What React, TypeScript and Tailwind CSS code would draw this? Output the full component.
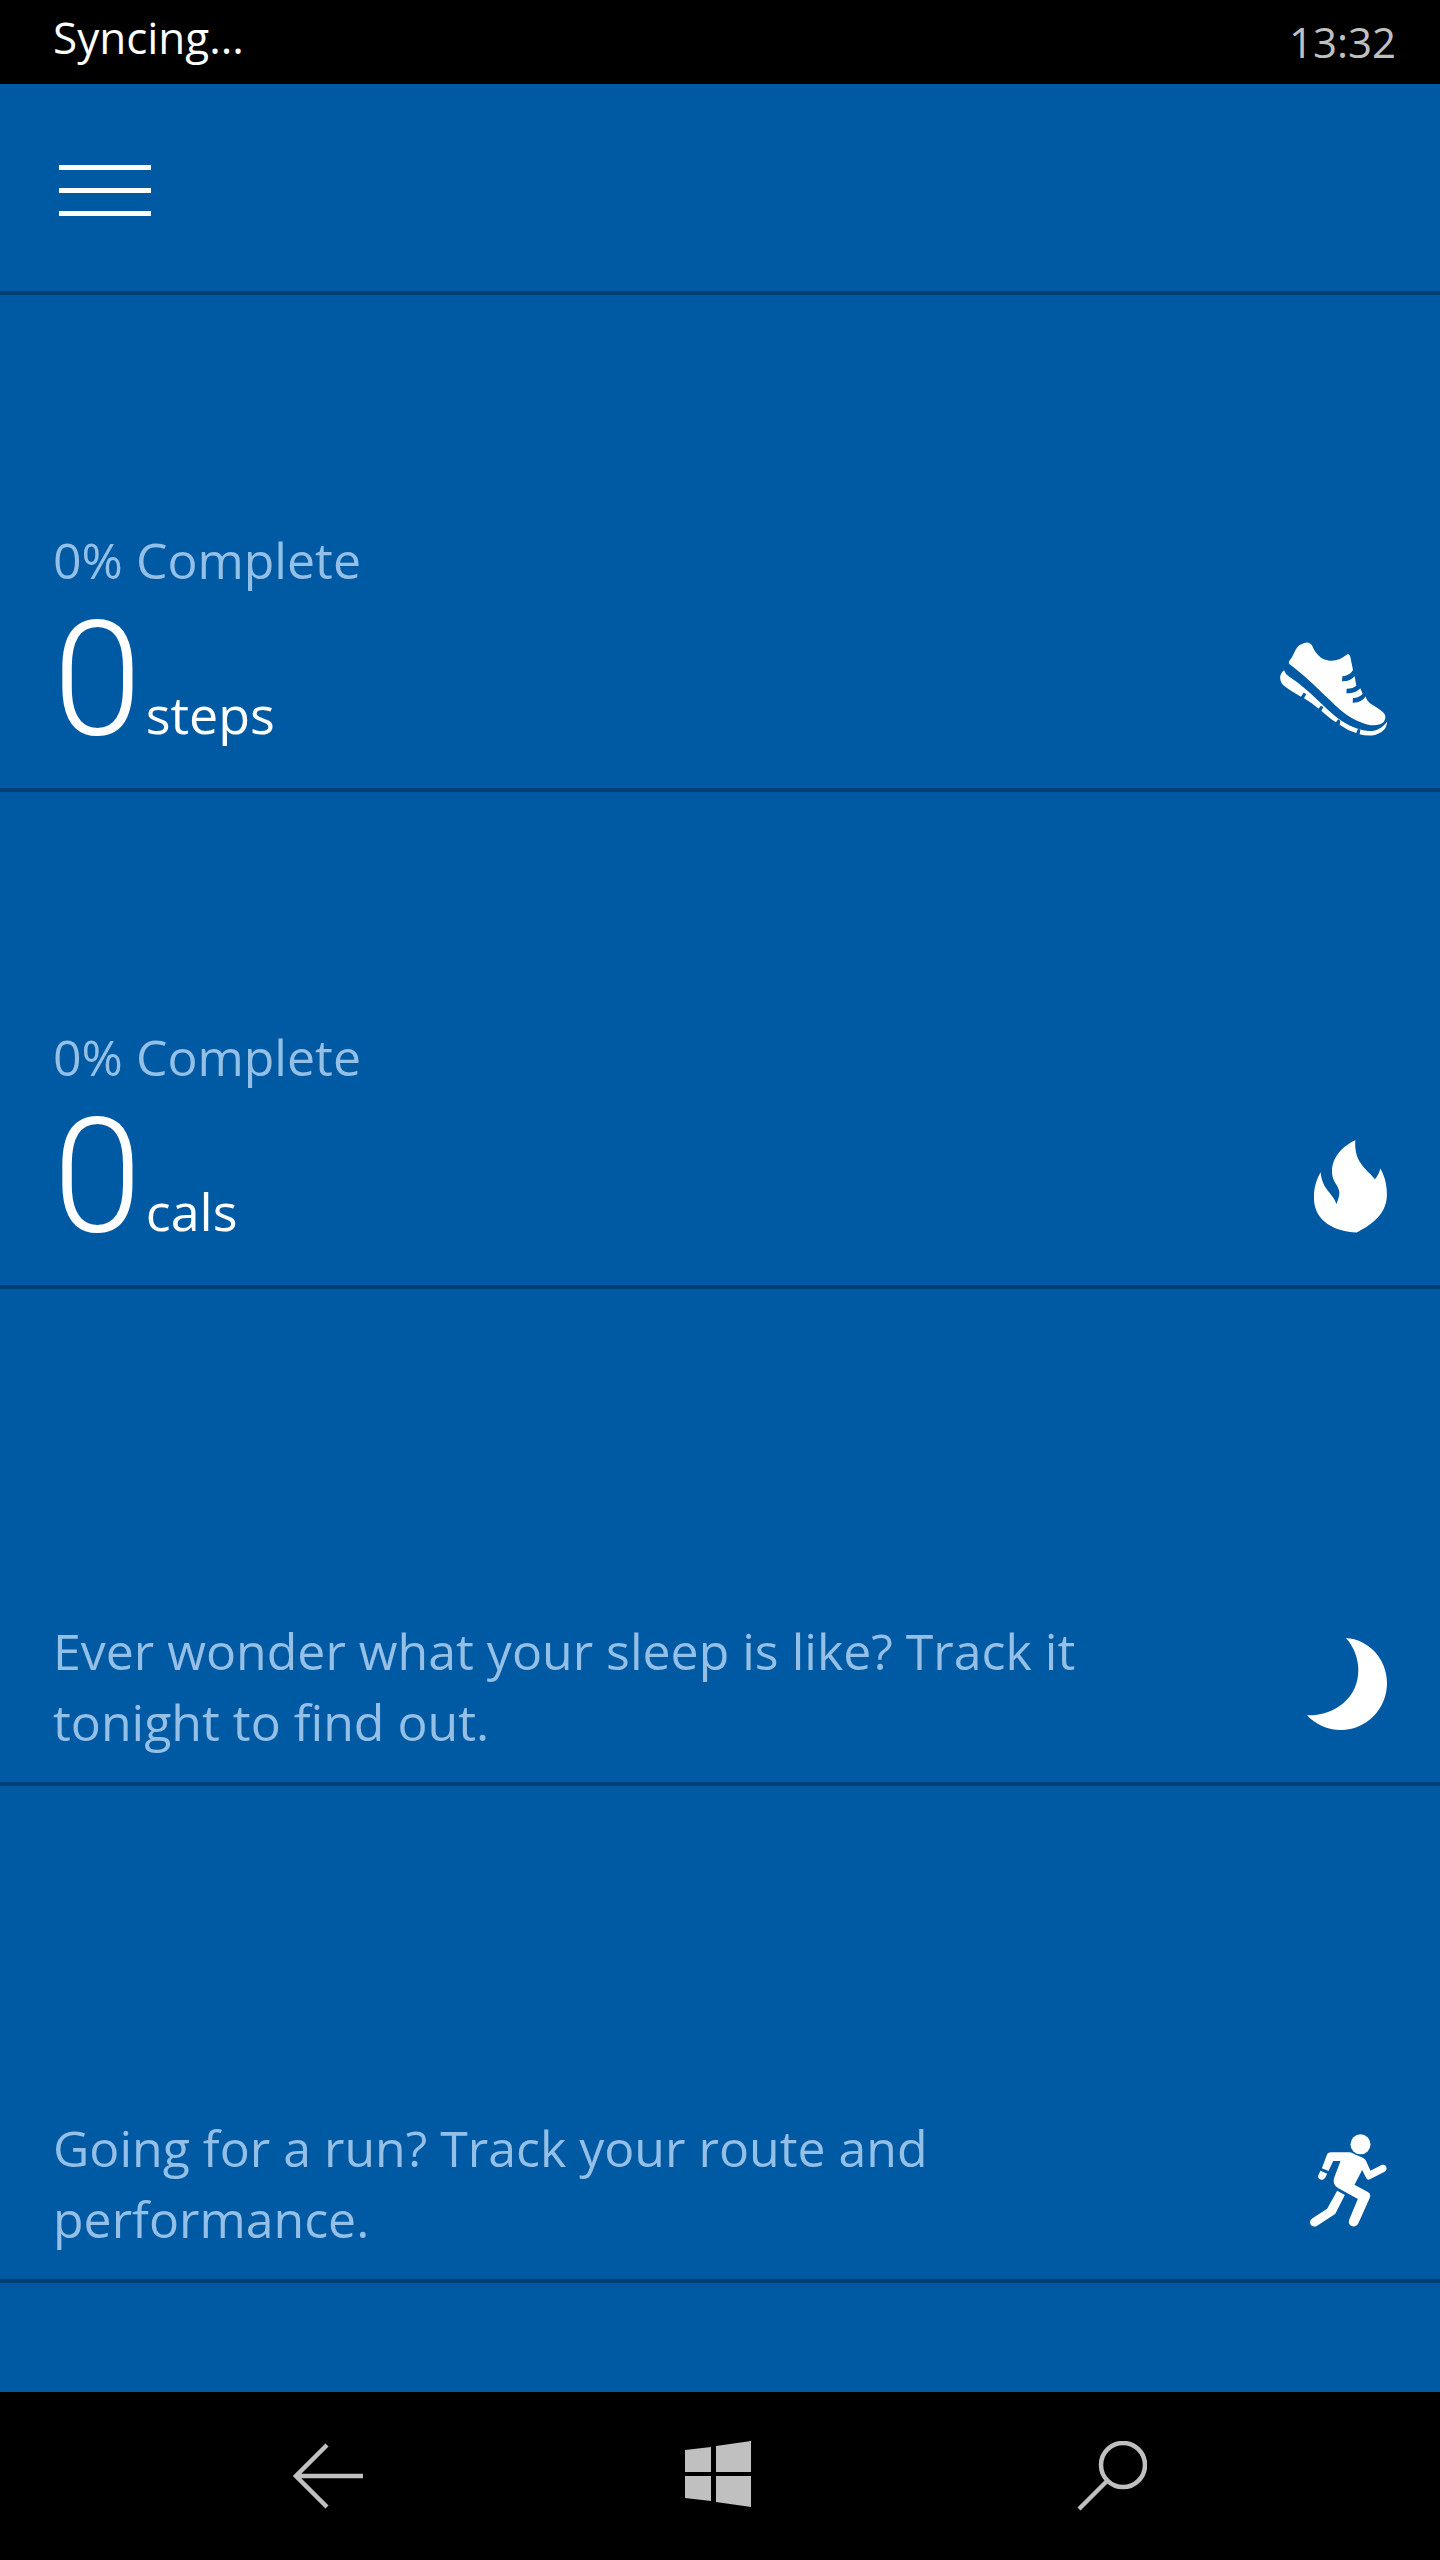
import type { ReactNode } from "react";

const ShoeIcon = () => (
    <svg viewBox="60 67 321 282" className="w-[107px] h-[94px]" fill="currentColor" aria-hidden="true">
        <path d="M138 69C146 67 152 72 157 79C164 95 174 110 190 118C206 125 222 125 238 119C248 115 255 108 262 104C267 102 270 107 271 112L279 151C274 160 264 168 247 170L246 185C262 186 276 180 284 170L289 198C282 204 273 207 260 207L259 221C276 222 293 216 301 206L308 222C302 230 292 234 279 235L278 249C294 250 309 243 317 230C319 240 324 247 333 253C350 264 366 271 374 284C378 292 376 300 371 307C358 319 332 320 308 310C285 301 264 291 245 274C195 230 148 178 88 133C85 129 87 124 90 121C102 108 104 88 118 77C124 73 131 70 138 69Z" />
        <path d="M73 152C75 165 88 171 98 178C140 207 180 249 217 282C247 309 285 329 325 334C347 336 368 324 381 306C382 325 367 340 345 346C329 349 313 348 299 344L301 331L294 327L289 340C271 335 255 326 239 315L241 303L234 299L228 308C212 298 197 284 184 273L190 262L182 258L176 267C162 257 149 245 132 236L139 223L131 219L123 231C107 222 88 211 74 200C63 191 59 181 61 168C63 161 67 155 73 152Z" />
    </svg>
);

const FlameIcon = () => (
    <svg viewBox="72 62 219 278" className="w-[73px] h-[93px]" fill="currentColor" aria-hidden="true">
        <path d="M196 62C158 79 124 114 126 160C127 190 149 198 148 222C147 235 143 244 139 254C132 222 96 212 92 158C78 181 70 209 72 241C75 306 135 337 200 339C238 319 283 292 290 238C293 204 286 173 271 147C268 159 263 170 255 179C231 148 191 130 196 62Z" />
    </svg>
);

const MoonIcon = () => (
    <svg viewBox="48 54 240 276" className="w-20 h-[92px]" fill="currentColor" aria-hidden="true">
        <path d="M165 54C232 58 288 116 288 189C288 267 226 330 150 330C109 330 73 313 48 286C134 288 202 232 202 150C202 114 188 80 165 54Z" />
    </svg>
);

const RunnerIcon = () => (
    <svg viewBox="60 43 230 279" className="w-[77px] h-[93px]" fill="currentColor" aria-hidden="true">
        <circle cx="211" cy="74" r="30" />
        <path d="M122 98H178C184 98 188 101 193 104L218 114C223 117 226 120 228 125L241 153L274 136C281 133 288 137 289 144C290 150 287 154 282 157L239 179C234 181 231 180 228 175L216 151L193 195L233 217C239 221 242 226 239 234L205 310C201 319 192 322 184 319C177 316 174 308 177 300L203 238L145 206C132 198 128 187 132 174L151 124H129L115 154L95 146L110 106C112 101 116 98 122 98Z" />
        <path d="M91 153L111 162L105 174C101 180 94 182 88 178C83 174 83 170 85 165Z" />
        <path d="M141 213L164 226L137 279C135 283 132 285 129 287L81 318C73 323 65 321 61 314C58 307 60 301 67 296L111 267Z" />
    </svg>
);

const BackIcon = () => (
    <svg viewBox="0 0 70 66" className="w-[70px] h-[66px]" fill="none" stroke="currentColor" strokeWidth="4.5" aria-hidden="true">
        <path d="M34 2L3 33L34 64M3 33H70" />
    </svg>
);

const WindowsIcon = () => (
    <svg viewBox="0 0 70 70" className="w-[70px] h-[70px]" fill="currentColor" aria-hidden="true">
        <path d="M0 9L26 6V31H0ZM31 5L66 0V31H31ZM0 35H26V60L0 57ZM31 35H66V66L31 61Z" />
    </svg>
);

const SearchIcon = () => (
    <svg viewBox="0 0 70 70" className="w-[70px] h-[70px]" fill="none" stroke="currentColor" strokeWidth="4.5" aria-hidden="true">
        <circle cx="46" cy="24" r="22" />
        <path d="M30 40L2 68" />
    </svg>
);

type TileProps = {
    icon: ReactNode;
    children: ReactNode;
};

const Tile = ({ icon, children }: TileProps) => (
    <a href="#" className="flex items-end gap-16 h-[497px] px-[53px] border-b-4 border-[#003f73]">
        <div className="flex-1 pb-6">{children}</div>
        <div className="flex justify-end w-[107px] pb-[52px]">{icon}</div>
    </a>
);

const Metric = ({ value, unit, progress }: { value: number; unit: string; progress: string }) => (
    <>
        <p className="text-[50px] leading-[71px] text-[#94bfe6]">{progress}</p>
        <p className="flex items-baseline gap-1">
            <span className="font-[Roboto] text-[160px] leading-[168px] font-light">{value}</span>
            <span className="text-[52px] leading-none">{unit}</span>
        </p>
    </>
);

const Hint = ({ text }: { text: string }) => (
    <p className="text-[50px] leading-[71px] text-[#94bfe6]">{text}</p>
);

export default function App() {
    return (
        <div className="flex flex-col min-h-screen bg-[#005aa3] text-white font-['Open_Sans','Noto_Sans',sans-serif]">
            <div className="flex items-start justify-between h-[84px] pl-[53px] pr-11 bg-black">
                <span className="text-[44px] leading-[74px]">Syncing...</span>
                <span className="text-[42px] leading-[84px] text-[#c0c0c0]">13:32</span>
            </div>
            <header className="flex items-center h-[211px] px-[59px] pt-1.5 border-b-4 border-[#003f73]">
                <button type="button" aria-label="Menu" className="flex flex-col gap-[18px] w-[92px]">
                    <span className="h-[5px] w-full bg-white" />
                    <span className="h-[5px] w-full bg-white" />
                    <span className="h-[5px] w-full bg-white" />
                </button>
            </header>
            <main className="flex-1">
                <Tile icon={<ShoeIcon />}>
                    <Metric value={0} unit="steps" progress="0% Complete" />
                </Tile>
                <Tile icon={<FlameIcon />}>
                    <Metric value={0} unit="cals" progress="0% Complete" />
                </Tile>
                <Tile icon={<MoonIcon />}>
                    <Hint text="Ever wonder what your sleep is like? Track it tonight to find out." />
                </Tile>
                <Tile icon={<RunnerIcon />}>
                    <Hint text="Going for a run? Track your route and performance." />
                </Tile>
            </main>
            <nav className="flex items-center justify-between h-[168px] px-[293px] bg-black text-[#c0c0c0]">
                <button type="button" aria-label="Back"><BackIcon /></button>
                <button type="button" aria-label="Start"><WindowsIcon /></button>
                <button type="button" aria-label="Search"><SearchIcon /></button>
            </nav>
        </div>
    );
}
